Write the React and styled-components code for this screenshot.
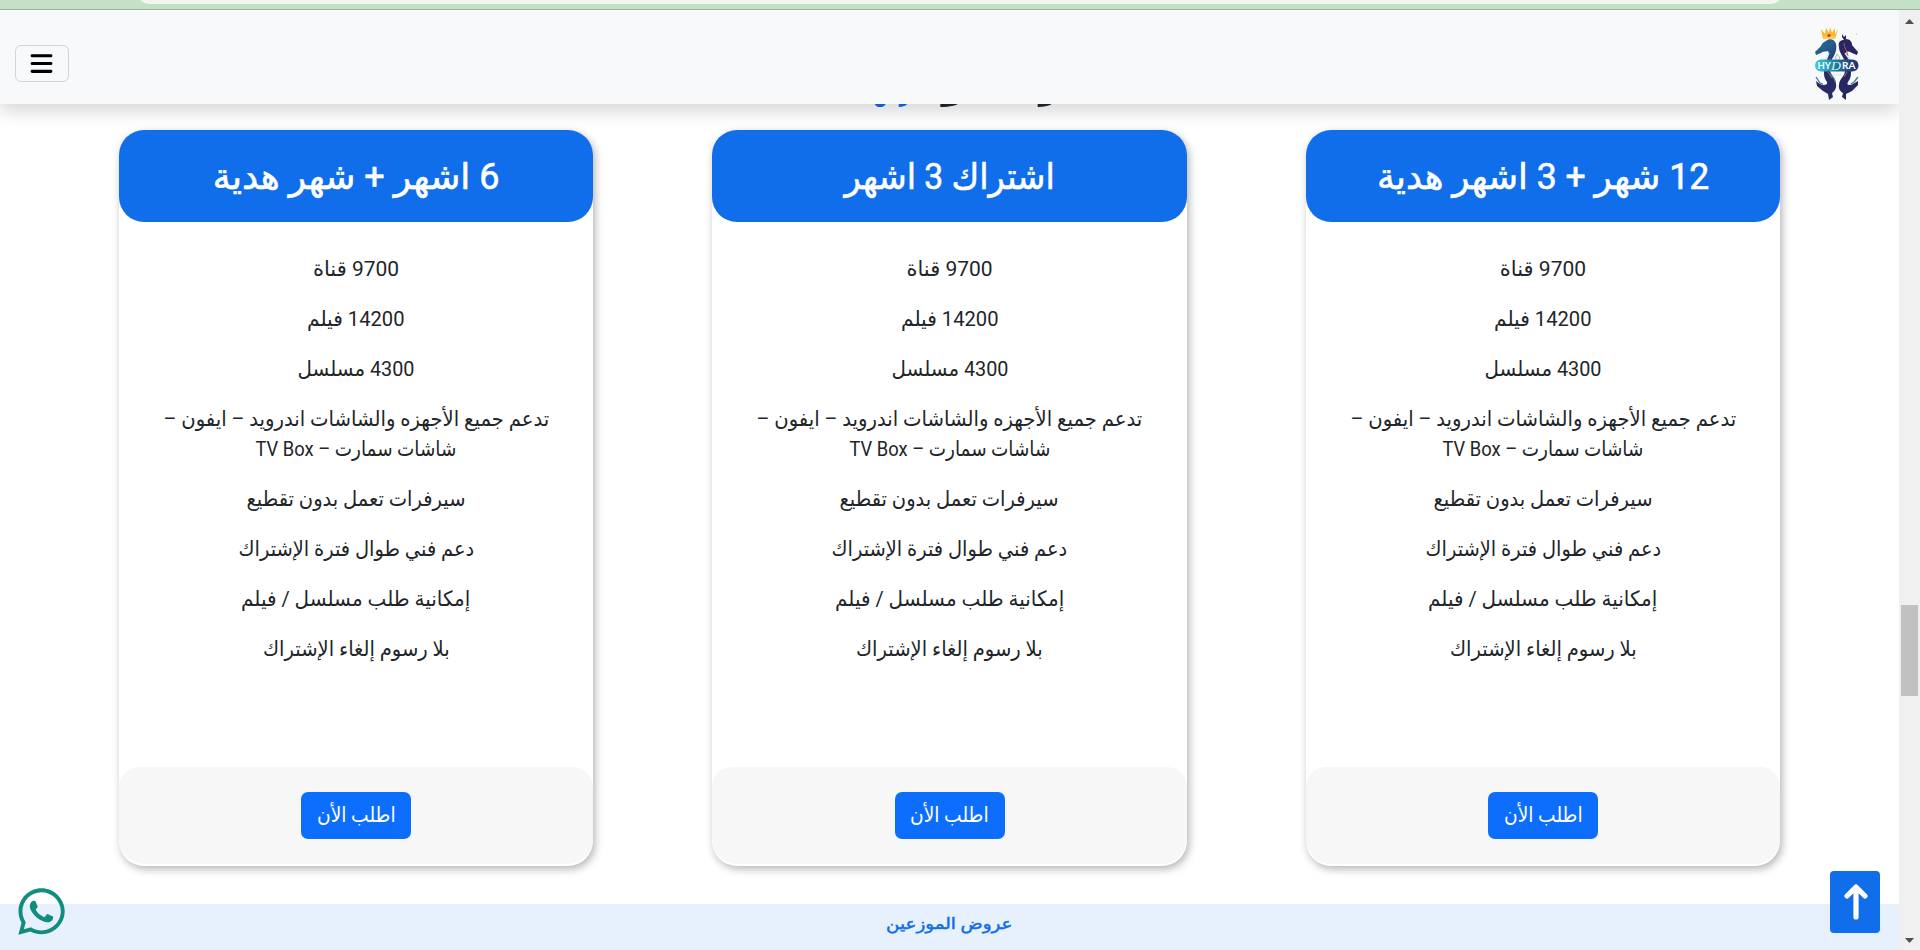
import React, { useLayoutEffect, useRef, useState } from "react";
import styled, { createGlobalStyle } from "styled-components";
import { FaBars, FaWhatsapp } from "react-icons/fa6";

const GlobalStyle = createGlobalStyle`
  *, *::before, *::after { box-sizing: border-box; }
  body {
    margin: 0;
    background: #fff;
    color: #212529;
    font-family: Roboto, "DejaVu Sans", sans-serif;
    overflow: hidden;
  }
`;

const Window = styled.div`
  display: flex;
  flex-direction: column;
  height: 950px;
  overflow: hidden;
`;

const BrowserEdge = styled.div`
  flex: none;
  height: 10px;
  padding: 0 141px;
  background: #c5e1c5;
  border-bottom: 1px solid #9db5a0;
`;

const AddressBar = styled.div`
  height: 4px;
  border-radius: 0 0 10px 10px / 0 0 4px 4px;
  background: #eef6ee;
`;

const Viewport = styled.div`
  flex: 1;
  min-height: 0;
  display: flex;
`;

const Page = styled.div`
  flex: 1;
  display: flex;
  flex-direction: column;
  position: relative;
  overflow: hidden;
`;

const Navbar = styled.header`
  flex: none;
  height: 94px;
  padding: 0 39px 0 15px;
  display: flex;
  align-items: center;
  justify-content: space-between;
  background: #f8f9fb;
  box-shadow: 0 8px 16px rgba(0, 0, 0, 0.15);
  position: relative;
  z-index: 2;
`;

const MenuButton = styled.button`
  width: 54px;
  height: 37px;
  margin-top: 13px;
  padding: 0 1px 0 0;
  display: flex;
  align-items: center;
  justify-content: center;
  border: 1px solid #d3d4d6;
  border-radius: 6px;
  background: transparent;
  color: #000;
  font-size: 25px;
`;

const LogoLink = styled.a`
  display: block;
  width: 45px;
  height: 73px;
  margin-top: 12px;
`;

/* The section title has scrolled up beneath the navbar. */
const SectionTitle = styled.h2`
  flex: none;
  display: grid;
  grid-template-columns: 90px 81px 52px;
  justify-content: center;
  justify-items: center;
  align-content: end;
  direction: rtl;
  height: 26px;
  margin: 0;
  padding: 0 0 22px 103px;
  column-gap: 16px;
  font-size: 28px;
  line-height: 34px;
  font-weight: 700;
`;

const Accent = styled.span`
  color: #106eea;
`;

const Plans = styled.section`
  flex: none;
  display: flex;
  justify-content: space-evenly;
  height: 774px;
`;

const Card = styled.article`
  display: flex;
  flex-direction: column;
  width: 25%;
  height: 736px;
  padding-bottom: 2px;
  border-radius: 25px;
  background: #fff;
  box-shadow: 2px 3px 8px rgba(0, 0, 0, 0.3);
`;

const CardTitle = styled.h3`
  display: flex;
  align-items: center;
  justify-content: center;
  height: 92px;
  margin: 0;
  padding-top: 1px;
  border-radius: 25px;
  background: #106eea;
  color: #fff;
  direction: rtl;
  font-size: 36px;
  font-weight: 400;
  line-height: 42px;
  -webkit-text-stroke: 0.6px #fff;
`;

const Features = styled.ul`
  flex: 1;
  display: flex;
  flex-direction: column;
  gap: 20px;
  margin: 0;
  padding: 32px 16px 0;
  list-style: none;
  direction: rtl;
  font-size: 21px;
  font-weight: 400;
  line-height: 30px;
`;

const Feature = styled.li`
  display: flex;
  flex-direction: column;
  align-items: center;
`;

const CardFooter = styled.footer`
  display: flex;
  justify-content: center;
  height: 97px;
  padding-top: 25px;
  border-radius: 20px 20px 25px 25px;
  background: #f7f7f7;
`;

const OrderButton = styled.button`
  display: flex;
  align-items: center;
  justify-content: center;
  width: 110px;
  height: 47px;
  padding: 0 0 1px;
  border: 0;
  border-radius: 7px;
  background: #0d6efd;
  color: #fff;
  direction: rtl;
  font: inherit;
  font-size: 21px;
  line-height: 30px;
`;

const Resellers = styled.section`
  flex: 1;
  display: flex;
  justify-content: center;
  padding-top: 8px;
  background: #e7f1fd;
  color: #106eea;
  direction: rtl;
  font-size: 16px;
  line-height: 24px;
  -webkit-text-stroke: 0.5px #106eea;
`;

const ScrollTop = styled.a`
  position: absolute;
  right: 19px;
  bottom: 17px;
  display: flex;
  align-items: center;
  justify-content: center;
  width: 50px;
  height: 62px;
  padding-left: 2px;
  border-radius: 4px;
  background: #106eea;
`;

const WhatsappLink = styled.a`
  position: absolute;
  left: 15px;
  bottom: 12px;
  display: flex;
  color: #128c7e;
  font-size: 53px;
`;

const Scrollbar = styled.aside`
  flex: none;
  display: flex;
  flex-direction: column;
  align-items: center;
  width: 21px;
  padding: 9px 0 7px;
  background: #f0f0f0;
`;

const ScrollThumb = styled.div`
  width: 17px;
  height: 91px;
  margin: 581px 0 auto;
  background: #c1c1c1;
`;

const Fitted = styled.span`
  display: inline-block;
  flex: none;
  white-space: nowrap;
`;

/* Scales one line of text horizontally so that it spans the given width. */
function FitLine({ width, children }) {
  const ref = useRef(null);
  const [scale, setScale] = useState(1);
  useLayoutEffect(() => {
    setScale(width / ref.current.offsetWidth);
  }, [width, children]);
  return (
    <Fitted ref={ref} style={{ transform: `scaleX(${scale})` }}>
      {children}
    </Fitted>
  );
}

const plans = [
  { title: "6 اشهر + شهر هدية", width: 287 },
  { title: "اشتراك 3 اشهر", width: 210 },
  { title: "12 شهر + 3 اشهر هدية", width: 332 },
];

const features = [
  [["9700 قناة", 86]],
  [["14200 فيلم", 98]],
  [["4300 مسلسل", 117]],
  [
    ["تدعم جميع الأجهزه والشاشات اندرويد – ايفون –", 386],
    ["شاشات سمارت – TV Box", 201],
  ],
  [["سيرفرات تعمل بدون تقطيع", 219]],
  [["دعم فني طوال فترة الإشتراك", 236]],
  [["إمكانية طلب مسلسل / فيلم", 229]],
  [["بلا رسوم إلغاء الإشتراك", 187]],
];

function HydraLogo() {
  return (
    <svg viewBox="0 0 45 73" width="45" height="73" role="img" aria-label="Hydra">
      <defs>
        <linearGradient id="tealHorse" x1="0" y1="0" x2="1" y2="1">
          <stop offset="0" stopColor="#226f91" />
          <stop offset="0.55" stopColor="#27578a" />
          <stop offset="1" stopColor="#252b69" />
        </linearGradient>
        <linearGradient id="banner">
          <stop offset="0" stopColor="#38d0df" />
          <stop offset="0.5" stopColor="#1d7897" />
          <stop offset="1" stopColor="#252b67" />
        </linearGradient>
      </defs>
      <path
        d="M11 14C14 11 20 12 21 17C22 23 20 28 17 32L16 36H10C13 31 15 27 13 24C10 25 8 24 6 26L1 28L0 25L6 19C7 16 9 15 11 14Z"
        fill="url(#tealHorse)"
      />
      <path
        d="M27 7L29 10L31 8L31 12C35 12 37 15 37 18L43 25L42 28L37 26C34 24 31 24 31 26C32 30 35 31 36 35H30C29 30 24 26 24 20C23 15 25 13 29 13L27 10Z"
        fill="#272762"
      />
      <path d="M29 16C29 21 32 23 33 29" fill="none" stroke="#b84d50" strokeWidth="1" />
      <path d="M14 26C12 30 10 31 11 34M30 26C32 30 35 31 34 34" fill="none" stroke="#dfe4ee" strokeWidth="1.2" />
      <path
        d="M9 44H15C16 48 21 52 21 57C22 61 19 65 17 66L18 70L14 73L13 67L8 64L2 59L1 54L5 57C9 59 13 58 12 55C9 51 9 48 9 44Z"
        fill="#282a66"
      />
      <path
        d="M36 44H30C30 49 24 52 24 58C23 62 26 65 28 66L27 70L31 73L31 67L37 64L43 58L43 54L38 57C34 59 31 58 33 55C36 51 36 48 36 44Z"
        fill="#272762"
      />
      <path d="M1 50L5 56L8 57M15 47C18 50 20 52 20 55M43 50L39 55L36 57" fill="none" stroke="#347b9b" strokeWidth="1.3" />
      <path d="M13 45L17 51M32 45L29 50" stroke="#c96d64" strokeWidth="0.8" />
      <path d="M6 2L10 7L11 1L14 6L15 0L17 6L20 1L20 7L23 2L20 12H8Z" fill="#f8b72d" />
      <path d="M8 9.5H20L19.5 12H8.5Z" fill="#ffce58" />
      <circle cx="14" cy="8.5" r="1.6" fill="#df2839" />
      <circle cx="41.500" cy="7" r="0.8" fill="#efb4b4" />
      <path d="M17 48H26" stroke="#efdcd6" />
      <rect x="0" y="32.500" width="43.500" height="12" rx="6" fill="url(#banner)" />
      <path d="M20 31L22 27L25 31L23 33Z" fill="#f4f5f9" stroke="#7e8ca3" strokeWidth="0.6" />
      <text x="2.500" y="42" fill="#fff" fontFamily="Lato, sans-serif" fontSize="9.5" fontWeight="700" textLength="13.5" lengthAdjust="spacingAndGlyphs">HY</text>
      <text x="16" y="43" fill="#d9f0f5" fontFamily="Liberation Serif, serif" fontStyle="italic" fontSize="13" textLength="10" lengthAdjust="spacingAndGlyphs">D</text>
      <text x="27" y="42" fill="#fff" fontFamily="Lato, sans-serif" fontSize="9.5" fontWeight="700" textLength="13.5" lengthAdjust="spacingAndGlyphs">RA</text>
    </svg>
  );
}

function PlanCard({ title, width }) {
  return (
    <Card>
      <CardTitle>
        <FitLine width={width}>{title}</FitLine>
      </CardTitle>
      <Features>
        {features.map((lines) => (
          <Feature key={lines[0][0]}>
            {lines.map(([text, lineWidth]) => (
              <FitLine key={text} width={lineWidth}>{text}</FitLine>
            ))}
          </Feature>
        ))}
      </Features>
      <CardFooter>
        <OrderButton>
          <FitLine width={79}>اطلب الأن</FitLine>
        </OrderButton>
      </CardFooter>
    </Card>
  );
}

export default function App() {
  return (
    <Window>
      <GlobalStyle />
      <BrowserEdge>
        <AddressBar />
      </BrowserEdge>
      <Viewport>
        <Page>
          <Navbar>
            <MenuButton aria-label="القائمة">
              <FaBars />
            </MenuButton>
            <LogoLink>
              <HydraLogo />
            </LogoLink>
          </Navbar>
          <SectionTitle>
            <FitLine width={90}>اسعار</FitLine>
            <FitLine width={81}>اكثر</FitLine>
            <Accent>
              <FitLine width={52}>عرض</FitLine>
            </Accent>
          </SectionTitle>
          <Plans>
            {plans.map((plan) => (
              <PlanCard key={plan.title} {...plan} />
            ))}
          </Plans>
          <Resellers>
            <FitLine width={127}>عروض الموزعين</FitLine>
          </Resellers>
          <WhatsappLink aria-label="واتساب">
            <FaWhatsapp />
          </WhatsappLink>
          <ScrollTop aria-label="أعلى">
            <svg width="24" height="36" viewBox="0 0 24 36" fill="none" stroke="#fff" strokeWidth="5.200" strokeLinecap="round" strokeLinejoin="round">
              <path d="M12 33V4M3 12L12 3L21 12" />
            </svg>
          </ScrollTop>
        </Page>
        <Scrollbar>
          <svg width="9" height="5" viewBox="0 0 9 5">
            <path d="M0 5L4.500 0L9 5Z" fill="#505050" />
          </svg>
          <ScrollThumb />
          <svg width="9" height="5" viewBox="0 0 9 5">
            <path d="M0 0L4.500 5L9 0Z" fill="#505050" />
          </svg>
        </Scrollbar>
      </Viewport>
    </Window>
  );
}
